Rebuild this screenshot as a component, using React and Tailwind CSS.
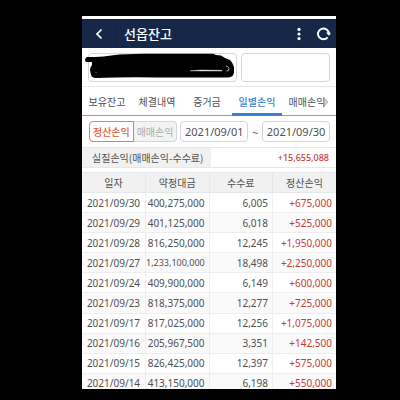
import React, { useState } from "react";

const tabs = ["보유잔고", "체결내역", "증거금", "일별손익", "매매손익"];

const rows = [
  { date: "2021/09/30", amount: "400,275,000", fee: "6,005", profit: "+675,000" },
  { date: "2021/09/29", amount: "401,125,000", fee: "6,018", profit: "+525,000" },
  { date: "2021/09/28", amount: "816,250,000", fee: "12,245", profit: "+1,950,000" },
  { date: "2021/09/27", amount: "1,233,100,000", fee: "18,498", profit: "+2,250,000" },
  { date: "2021/09/24", amount: "409,900,000", fee: "6,149", profit: "+600,000" },
  { date: "2021/09/23", amount: "818,375,000", fee: "12,277", profit: "+725,000" },
  { date: "2021/09/17", amount: "817,025,000", fee: "12,256", profit: "+1,075,000" },
  { date: "2021/09/16", amount: "205,967,500", fee: "3,351", profit: "+142,500" },
  { date: "2021/09/15", amount: "826,425,000", fee: "12,397", profit: "+575,000" },
  { date: "2021/09/14", amount: "413,150,000", fee: "6,198", profit: "+550,000" },
];

function Header() {
  return (
    <header className="mt-[3px] flex h-[29px] shrink-0 items-center bg-[#172747] text-white">
      <button aria-label="뒤로" className="flex h-full w-[34px] items-center justify-center border-r border-[#142340]">
        <svg width="8" height="12" viewBox="0 0 8 12" fill="none" stroke="currentColor" strokeWidth="1.7">
          <path d="M6.5 1.5 2 6l4.5 4.5" />
        </svg>
      </button>
      <h1 className="ml-2 flex-1 text-[13px] leading-4 font-medium">선옵잔고</h1>
      <button aria-label="메뉴" className="flex h-full w-5 items-center justify-center">
        <svg width="4" height="14" viewBox="0 0 4 14" fill="currentColor">
          <circle cx="2" cy="2.4" r="1.6" />
          <circle cx="2" cy="7" r="1.6" />
          <circle cx="2" cy="11.6" r="1.6" />
        </svg>
      </button>
      <button aria-label="새로고침" className="mr-[5px] ml-[7px] flex h-full w-[15px] items-center justify-center">
        <svg width="15" height="14" viewBox="0 0 15 14" fill="none">
          <path d="M11.6 10.3A5.4 5.4 0 1 1 12.8 6.4" stroke="currentColor" strokeWidth="1.9" />
          <path d="M10.2 5.6h4.2v1.8l-2 1.2z" fill="currentColor" />
        </svg>
      </button>
    </header>
  );
}

function Account() {
  return (
    <div className="flex h-[39px] shrink-0 gap-1 border-b border-gray-200 px-[6px] pt-[5px]">
      <div className="relative h-[29px] flex-[150]">
        <input
          aria-label="계좌번호"
          className="h-full w-full rounded border border-gray-300 bg-white"
        />
        {/* blacked out account number */}
        <svg
          className="absolute top-0 -left-[3px] h-7 w-[151px]"
          viewBox="0 0 151 28"
          preserveAspectRatio="none"
        >
          <path
            d="M2 4Q0 5 0 7Q0 9 2 9L7 9L7 12Q5 14 5 17L6 22Q7 25 11 25L30 24.5Q50 24 72 24.5L143 24.5Q149 24 149 19L149 14Q148 10 145 7L140 5L136 2.5L131 2L128 0.8L60 0.8Q40 1 28 2.2Q18 4 10 4Z"
            fill="#000"
          />
          <path d="M105 17.8L116 17L137 17.3L137 18L116 18Z" fill="#eee" stroke="#ddd" strokeWidth="0.4" />
          <path d="M141 13q4 1 2.5 4.5l-2 .5" stroke="#ccc" strokeWidth="0.9" fill="none" />
          <circle cx="11" cy="19.5" r="0.6" fill="#999" />
        </svg>
      </div>
      <input
        aria-label="비밀번호"
        type="password"
        className="h-[29px] min-w-0 flex-[88] rounded border border-gray-300 bg-white"
      />
    </div>
  );
}

function Filter() {
  const [mode, setMode] = useState("settle");
  const [from, setFrom] = useState("2021/09/01");
  const [to, setTo] = useState("2021/09/30");

  return (
    <div className="flex h-[31px] shrink-0 items-center pr-[6px] pl-[7px]">
      <div className="mr-[3px] flex h-[21px] flex-[90]">
        <button
          onClick={() => setMode("settle")}
          className={`flex-1 rounded-l border ${mode === "settle" ? "border-[#dc8061] bg-white font-medium text-[#d4603c]" : "border-gray-300 bg-[#f3f3f3] text-[#aaaaaa]"}`}
        >
          정산손익
        </button>
        <button
          onClick={() => setMode("trade")}
          className={`flex-1 rounded-r border ${mode === "trade" ? "border-[#dc8061] bg-white font-medium text-[#d4603c]" : "border-l-0 border-gray-300 bg-[#f3f3f3] text-[#aaaaaa]"}`}
        >
          매매손익
        </button>
      </div>
      <input
        aria-label="시작일"
        value={from}
        onChange={(e) => setFrom(e.target.value)}
        className="h-[21px] min-w-0 flex-[67] rounded border border-gray-300 text-center font-['Noto_Sans',sans-serif] text-[11px]"
      />
      <span className="w-[14px] text-center text-[11px]">~</span>
      <input
        aria-label="종료일"
        value={to}
        onChange={(e) => setTo(e.target.value)}
        className="h-[21px] min-w-0 flex-[67] rounded border border-gray-300 text-center font-['Noto_Sans',sans-serif] text-[11px]"
      />
    </div>
  );
}

function App() {
  const [active, setActive] = useState(3);

  return (
    <div className="flex h-screen flex-col bg-black pt-4 pr-16 pb-[11px] pl-[82px] font-['Noto_Sans_CJK_KR',sans-serif] text-[10px] leading-4 text-[#505050]">
      <main className="flex min-h-0 flex-1 flex-col overflow-hidden bg-white">
        <Header />
        <Account />

        <nav className="relative flex h-[29px] shrink-0 border-b border-[#6ea6dc] pr-1">
          {tabs.map((tab, i) => (
            <button
              key={tab}
              onClick={() => setActive(i)}
              className={`-mb-px flex-1 border-b-3 pt-1 ${active === i ? "border-[#377fd0] font-medium text-[#377fd0]" : "border-[#6ea6dc]/0"}`}
            >
              {tab}
            </button>
          ))}
          <svg className="absolute top-[9px] right-[7px]" width="6" height="12" viewBox="0 0 6 12">
            <path d="M1 1.5 5 6 1 10.5z" fill="#bbb" fillOpacity="0.7" stroke="#999" strokeWidth="0.6" />
          </svg>
        </nav>

        <Filter />

        <dl className="flex h-[21px] shrink-0 items-center border-y border-gray-200">
          <dt className="flex h-full flex-1 items-center bg-[#f1f1f1] pl-[10px] whitespace-nowrap">
            실질손익(매매손익-수수료)
          </dt>
          <dd className="flex-1 pr-[7px] text-right font-['Noto_Sans',sans-serif] text-[9px] font-medium text-[#c53b3b]">
            +15,655,088
          </dd>
        </dl>

        <table className="mt-1 h-[222px] w-full shrink-0 table-fixed border-collapse font-['Noto_Sans','Noto_Sans_CJK_KR',sans-serif] leading-none">
          <thead>
            <tr className="h-5 bg-[#f1f1f1]">
              {["일자", "약정대금", "수수료", "정산손익"].map((title) => (
                <th key={title} className="border-y border-r border-gray-200 p-0 font-normal last:border-r-0">
                  {title}
                </th>
              ))}
            </tr>
          </thead>
          <tbody>
            {rows.map((row) => (
              <tr key={row.date} className="h-5 border-b border-[#eeeeee] even:bg-[#fafafa]">
                <td className="border-r border-[#eeeeee] p-0 text-center">{row.date}</td>
                <td className={`border-r border-[#eeeeee] p-0 pr-1 text-right ${row.amount.length > 11 ? "text-[9px]" : ""}`}>
                  {row.amount}
                </td>
                <td className="border-r border-[#eeeeee] p-0 pr-1 text-right">{row.fee}</td>
                <td className="p-0 pr-1 text-right text-[#c53b3b]">{row.profit}</td>
              </tr>
            ))}
          </tbody>
        </table>
      </main>
    </div>
  );
}

export default App;
